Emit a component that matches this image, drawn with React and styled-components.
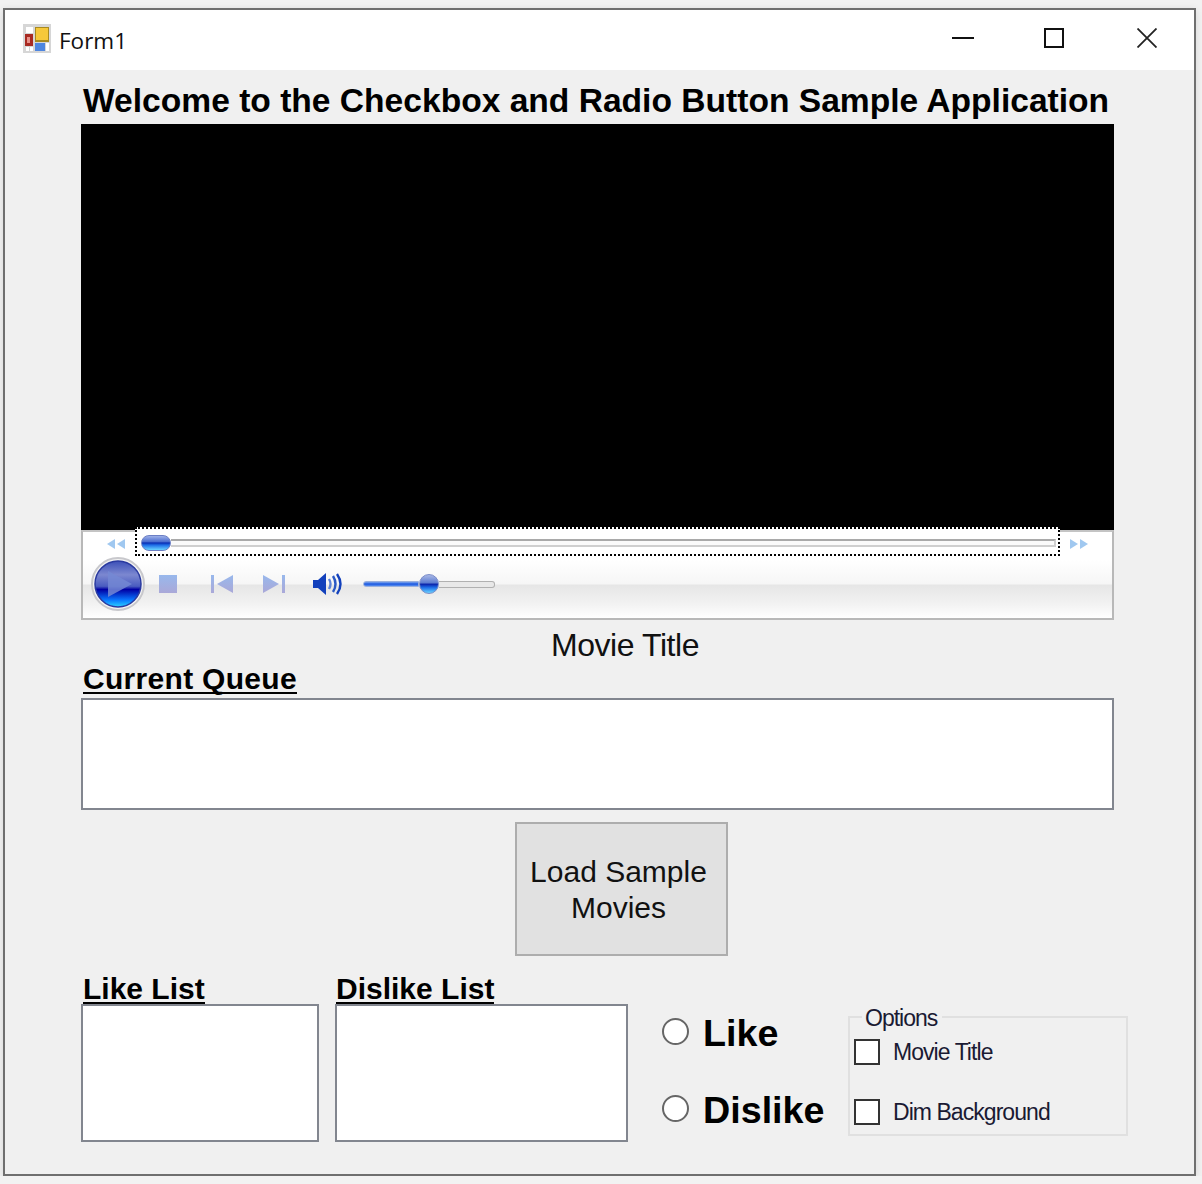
import styled, { createGlobalStyle } from 'styled-components';

const GlobalStyle = createGlobalStyle`
  html, body {
    margin: 0;
    padding: 0;
    background: #f2f2f2;
  }
  * {
    box-sizing: border-box;
  }
`;

const Window = styled.div`
  margin: 8px 0 0 3px;
  width: 1193px;
  height: 1168px;
  border: 2px solid #6f6f6f;
  background: #f0f0f0;
  font-family: "Liberation Sans", Arial, sans-serif;
  color: #000;
  box-shadow: 0 2px 8px rgba(0, 0, 0, 0.12);
`;

const TitleBar = styled.div`
  display: flex;
  align-items: center;
  height: 60px;
  padding: 0 0 4px 18px;
  background: #fff;
`;

const TitleText = styled.span`
  margin-left: 8px;
  margin-top: 6px;
  font-family: "Open Sans", sans-serif;
  font-size: 22.5px;
  line-height: 28px;
  color: #111;
`;

const WindowControls = styled.div`
  display: flex;
  margin-left: auto;
`;

const WindowControl = styled.div`
  display: flex;
  align-items: center;
  justify-content: center;
  width: ${props => props.$width}px;
  height: 40px;
`;

const Client = styled.div`
  display: flex;
  flex-direction: column;
  padding: 10px 0 0 76px;
`;

const Heading = styled.div`
  padding-left: 2px;
  font-size: 33.6px;
  font-weight: 700;
  line-height: 42px;
  white-space: nowrap;
  height: 44px;
`;

const Player = styled.div`
  width: 1033px;
`;

const Video = styled.div`
  height: 406px;
  background: #000;
`;

const PlayerBar = styled.div`
  height: 90px;
  border: 2px solid #b8b8b8;
  border-top-color: #c4c4c4;
  background: linear-gradient(#fff 0, #fff 28px, #f6f6f6 52px, #e6e6e6 53px, #f2f2f2 72px, #fff 86px);
`;

const SeekRow = styled.div`
  display: flex;
  align-items: center;
  height: 26px;
  padding: 0 0 0 24px;
`;

const SeekFocus = styled.div`
  display: flex;
  align-items: center;
  flex: none;
  width: 925px;
  height: 29px;
  margin: -7px 10px 0 10px;
  padding: 3px 2px 0 4px;
  border: 2px dotted #000;
  background: #fff;
`;

const SeekThumb = styled.div`
  flex: none;
  width: 30px;
  height: 16px;
  border: 1px solid #6c7fc4;
  border-radius: 8px;
  background: linear-gradient(#9db0e8 0, #4d6fd0 40%, #0a2fb4 50%, #1f6fe8 65%, #6ad4ff 100%);
`;

const SeekTrack = styled.div`
  flex: 1;
  height: 8px;
  border-top: 2px solid #a9a9a9;
  border-bottom: 2px solid #cfcfcf;
  border-right: 2px solid #cfcfcf;
  background: #fafafa;
`;

const ControlRow = styled.div`
  display: flex;
  align-items: center;
  height: 58px;
  padding: 0 0 6px 8px;
`;

const PlayIcon = styled.svg`
  flex: none;
  margin-right: 14px;
`;

const ControlIcon = styled.svg`
  flex: none;
  margin-right: ${props => props.$gap}px;
`;

const SkipIcon = styled.svg`
  flex: none;
  margin-top: -2px;
  transform: ${props => (props.$flip ? 'scaleX(-1)' : 'none')};
`;

const VolumeSlider = styled.div`
  display: flex;
  align-items: center;
  width: 132px;
  margin-left: 20px;
`;

const VolumeFill = styled.div`
  flex: none;
  width: 56px;
  height: 6px;
  border-radius: 3px 0 0 3px;
  background: linear-gradient(#7fa8ee, #1a56e0 50%, #5a90f0);
  border: 1px solid #9bb0dc;
`;

const VolumeThumb = styled.div`
  flex: none;
  width: 20px;
  height: 20px;
  border: 1px solid #7a8cc8;
  border-radius: 50%;
  background: linear-gradient(#a9b8e6 0, #5a7ad0 45%, #0a1fa8 50%, #1f6fe8 70%, #6ad4ff 100%);
`;

const VolumeRest = styled.div`
  flex: 1;
  height: 7px;
  border: 1px solid #b0b0b0;
  border-left: 0;
  border-radius: 0 3px 3px 0;
  background: #e8e8e8;
`;

const MovieTitle = styled.div`
  width: 1088px;
  margin-top: 6px;
  font-size: 32px;
  line-height: 38px;
  letter-spacing: -0.45px;
  text-align: center;
  color: #111;
`;

const ListLabel = styled.span`
  align-self: flex-start;
  margin-left: ${props => props.$indent}px;
  font-size: 30px;
  font-weight: 700;
  line-height: 32px;
  height: 31px;
  border-bottom: 2px solid #000;
  white-space: nowrap;
`;

const QueueLabel = styled(ListLabel)`
  margin-top: -1px;
  margin-bottom: 4px;
  letter-spacing: 0.3px;
`;

const ListBox = styled.div`
  width: ${props => props.$width}px;
  height: ${props => props.$height}px;
  background: #fff;
  border: 2px solid #82868f;
`;

const LoadButton = styled.button`
  display: block;
  width: 213px;
  height: 134px;
  margin: 12px 0 0 434px;
  padding: 2px 14px 0 8px;
  background: #e1e1e1;
  border: 2px solid #adadad;
  font-family: inherit;
  font-size: 30px;
  line-height: 36px;
  color: #111;
`;

const BottomRow = styled.div`
  display: flex;
  margin-top: 17px;
`;

const ListColumn = styled.div`
  display: flex;
  flex-direction: column;
  margin-right: 16px;
`;

const RadioColumn = styled.div`
  display: flex;
  flex-direction: column;
  flex: none;
  width: 186px;
  margin: 40px 0 0 18px;
  gap: 37px;
`;

const RadioRow = styled.label`
  display: flex;
  align-items: center;
  height: 40px;
  font-size: 37.7px;
  font-weight: 700;
  line-height: 40px;
`;

const RadioDot = styled.span`
  flex: none;
  width: 27px;
  height: 27px;
  margin: 0 14px 4px 0;
  background: #fff;
  border: 2px solid #666;
  border-radius: 50%;
`;

const OptionsGroup = styled.fieldset`
  flex: none;
  display: flex;
  flex-direction: column;
  width: 280px;
  height: 133px;
  margin: 30px 0 0 0;
  padding: 0 0 0 4px;
  border: 2px solid #e0e0e0;
`;

const OptionsLegend = styled.legend`
  margin-left: 8px;
  padding: 2px 5px 0 3px;
  font-size: 23px;
  line-height: 26px;
  letter-spacing: -1px;
  color: #1a1a33;
`;

const OptionRow = styled.label`
  display: flex;
  align-items: center;
  height: 26px;
  margin-top: ${props => props.$top}px;
  font-size: 23px;
  letter-spacing: -0.95px;
  color: #1a1a33;
  white-space: nowrap;
`;

const CheckBox = styled.span`
  flex: none;
  width: 26px;
  height: 26px;
  margin-right: 13px;
  background: #fff;
  border: 2px solid #333;
`;

const AppIcon = () => (
  <svg width="28" height="29" viewBox="0 0 28 29">
    <rect x="0" y="0" width="28" height="29" fill="#d6d6d6" />
    <rect x="3" y="3" width="7" height="6" fill="#fff" />
    <rect x="12" y="3" width="14" height="15" fill="#a88a20" />
    <rect x="13" y="4" width="12" height="12" fill="#f6c83a" />
    <rect x="2" y="10" width="8" height="12" fill="#a82a22" />
    <rect x="4" y="13" width="3" height="6" fill="#e89088" />
    <rect x="12" y="19" width="10" height="8" fill="#4e86e0" />
    <rect x="3" y="23" width="3" height="4" fill="#fff" />
    <rect x="7" y="23" width="3" height="4" fill="#fff" />
    <rect x="23" y="19" width="3" height="8" fill="#fff" />
  </svg>
);

const PlayButton = () => (
  <PlayIcon width="54" height="54" viewBox="0 0 54 54">
    <defs>
      <linearGradient id="playGlass" x1="0" y1="0" x2="0" y2="1">
        <stop offset="0" stopColor="#3c50b8" />
        <stop offset="0.3" stopColor="#7c88d0" />
        <stop offset="0.55" stopColor="#4a5cc0" />
        <stop offset="0.62" stopColor="#0000a4" />
        <stop offset="0.85" stopColor="#0a78ff" />
        <stop offset="1" stopColor="#2ad4ff" />
      </linearGradient>
      <linearGradient id="dimIcon" x1="0" y1="0" x2="0" y2="1">
        <stop offset="0" stopColor="#98b8ec" />
        <stop offset="1" stopColor="#aaa8d8" />
      </linearGradient>
    </defs>
    <circle cx="27" cy="27" r="26" fill="#f4f4f4" stroke="#c8c8cc" strokeWidth="2" />
    <circle cx="27" cy="27" r="23" fill="url(#playGlass)" stroke="#2a3aa0" strokeWidth="1.5" />
    <path d="M17 14 L41 27 L17 40 Z" fill="#7488d4" fillOpacity="0.85" />
  </PlayIcon>
);

const StopIcon = () => (
  <ControlIcon $gap={34} width="18" height="18" viewBox="0 0 18 18">
    <rect width="18" height="18" fill="url(#dimIcon)" />
  </ControlIcon>
);

const PrevIcon = () => (
  <ControlIcon $gap={30} width="22" height="20" viewBox="0 0 22 20">
    <rect x="0" y="1" width="3" height="18" fill="url(#dimIcon)" />
    <path d="M22 1 V19 L6 10 Z" fill="url(#dimIcon)" />
  </ControlIcon>
);

const NextIcon = () => (
  <ControlIcon $gap={28} width="22" height="20" viewBox="0 0 22 20">
    <path d="M0 1 V19 L16 10 Z" fill="url(#dimIcon)" />
    <rect x="19" y="1" width="3" height="18" fill="url(#dimIcon)" />
  </ControlIcon>
);

const SpeakerIcon = () => (
  <ControlIcon $gap={0} width="30" height="24" viewBox="0 0 30 24">
    <path d="M0 8 H5 L13 1 V23 L5 16 H0 Z" fill="#1240bc" />
    <g fill="none" strokeWidth="2.4">
      <path d="M16 7 Q19 12 16 17" stroke="#5c82d8" />
      <path d="M20 4 Q25 12 20 20" stroke="#2a58c4" />
      <path d="M24 2 Q31 12 24 22" stroke="#1240bc" />
    </g>
  </ControlIcon>
);

const SkipArrows = ({ flip }) => (
  <SkipIcon $flip={flip} width="18" height="12" viewBox="0 0 18 12">
    <path d="M8 1 V11 L0 6 Z" fill="#a0c8f0" />
    <path d="M18 1 V11 L10 6 Z" fill="#a0c8f0" />
  </SkipIcon>
);

const App = () => {
  return (
    <>
      <GlobalStyle />
      <Window>
        <TitleBar>
          <AppIcon />
          <TitleText>Form1</TitleText>
          <WindowControls>
            <WindowControl $width={90}>
              <svg width="22" height="2" viewBox="0 0 22 2"><rect width="22" height="2" fill="#111" /></svg>
            </WindowControl>
            <WindowControl $width={92}>
              <svg width="20" height="20" viewBox="0 0 20 20"><rect x="1" y="1" width="18" height="18" fill="none" stroke="#111" strokeWidth="2" /></svg>
            </WindowControl>
            <WindowControl $width={94}>
              <svg width="20" height="20" viewBox="0 0 20 20"><path d="M0.5 0.5 L19.5 19.5 M19.5 0.5 L0.5 19.5" fill="none" stroke="#222" strokeWidth="1.8" /></svg>
            </WindowControl>
          </WindowControls>
        </TitleBar>
        <Client>
          <Heading>Welcome to the Checkbox and Radio Button Sample Application</Heading>
          <Player>
            <Video />
            <PlayerBar>
              <SeekRow>
                <SkipArrows flip={false} />
                <SeekFocus>
                  <SeekThumb />
                  <SeekTrack />
                </SeekFocus>
                <SkipArrows flip />
              </SeekRow>
              <ControlRow>
                <PlayButton />
                <StopIcon />
                <PrevIcon />
                <NextIcon />
                <SpeakerIcon />
                <VolumeSlider>
                  <VolumeFill />
                  <VolumeThumb />
                  <VolumeRest />
                </VolumeSlider>
              </ControlRow>
            </PlayerBar>
          </Player>
          <MovieTitle>Movie Title</MovieTitle>
          <QueueLabel $indent={2}>Current Queue</QueueLabel>
          <ListBox $width={1033} $height={112} />
          <LoadButton>Load Sample Movies</LoadButton>
          <BottomRow>
            <ListColumn>
              <ListLabel $indent={2}>Like List</ListLabel>
              <ListBox $width={238} $height={138} />
            </ListColumn>
            <ListColumn>
              <ListLabel $indent={1}>Dislike List</ListLabel>
              <ListBox $width={293} $height={138} />
            </ListColumn>
            <RadioColumn>
              <RadioRow><RadioDot />Like</RadioRow>
              <RadioRow><RadioDot />Dislike</RadioRow>
            </RadioColumn>
            <OptionsGroup>
              <OptionsLegend>Options</OptionsLegend>
              <OptionRow $top={8}><CheckBox />Movie Title</OptionRow>
              <OptionRow $top={34}><CheckBox />Dim Background</OptionRow>
            </OptionsGroup>
          </BottomRow>
        </Client>
      </Window>
    </>
  );
};

export default App;
